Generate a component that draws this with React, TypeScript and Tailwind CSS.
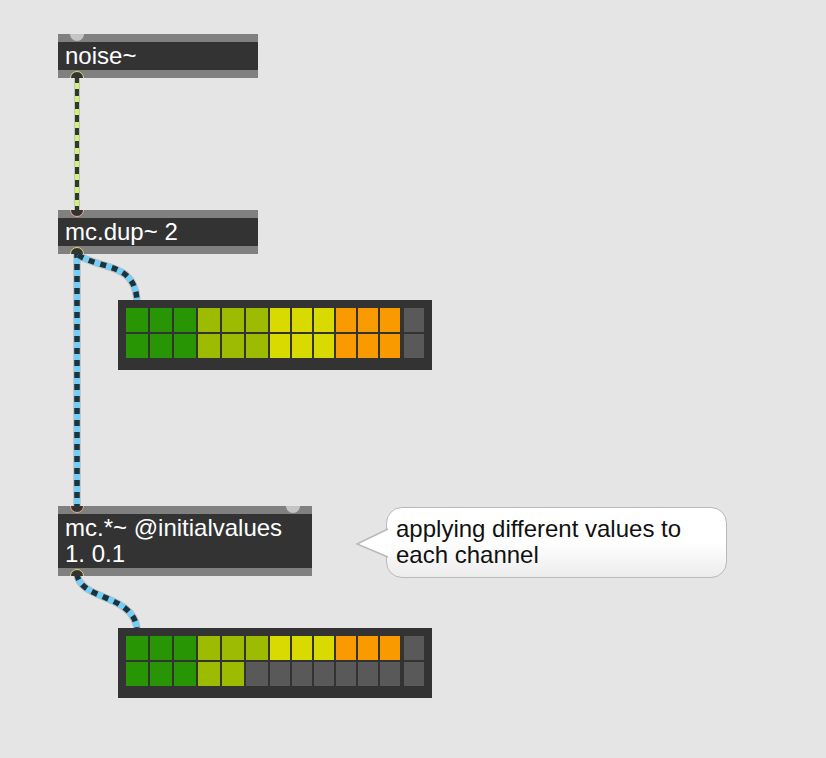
import React from "react";

const FONT = "font-['Liberation_Sans',Arial,sans-serif]";

type PortKind = "free" | "inlet" | "outlet";

function Port({ kind, left }: { kind: PortKind; left: string }) {
  if (kind === "free") {
    return (
      <div
        className={`absolute top-[-7px] ${left} w-[14px] h-[14px] rounded-full bg-[#c4c4c4]`}
      />
    );
  }
  if (kind === "inlet") {
    return (
      <div
        className={`absolute top-[-7px] ${left} w-[14px] h-[14px] rounded-full bg-[#333333] border-[1.5px] border-[#f2a694]`}
      />
    );
  }
  return (
    <div
      className={`absolute bottom-[-7px] ${left} w-[14px] h-[14px] rounded-full bg-[#333333] border-[1.5px] border-[#dcdc6a]`}
    />
  );
}

function ObjBox({
  pos,
  lines,
  ports,
  bodyH,
}: {
  pos: string;
  lines: string[];
  ports: React.ReactNode;
  bodyH: string;
}) {
  return (
    <div className={`absolute ${pos} overflow-hidden flex flex-col`}>
      <div className="h-[8px] bg-[#808080]" />
      <div
        className={`${bodyH} bg-[#333333] pl-[7px] pt-[1px] text-white text-[24px] leading-[26px] ${FONT} whitespace-pre`}
      >
        {lines.map((l, i) => (
          <div key={i}>{l}</div>
        ))}
      </div>
      <div className="h-[8px] bg-[#808080]" />
      {ports}
    </div>
  );
}

const GREEN = "bg-[#289604]";
const YG = "bg-[#9dbb00]";
const YEL = "bg-[#d9db00]";
const ORA = "bg-[#f99a00]";
const OFF = "bg-[#595959]";

const cellSpec: { w: string; c: string }[] = [
  { w: "w-[22px]", c: GREEN },
  { w: "w-[22px]", c: GREEN },
  { w: "w-[22px]", c: GREEN },
  { w: "w-[22px]", c: YG },
  { w: "w-[22px]", c: YG },
  { w: "w-[22px]", c: YG },
  { w: "w-[20px]", c: YEL },
  { w: "w-[20px]", c: YEL },
  { w: "w-[20px]", c: YEL },
  { w: "w-[20px]", c: ORA },
  { w: "w-[20px]", c: ORA },
  { w: "w-[20px]", c: ORA },
];

function MeterRow({ lit }: { lit: number }) {
  return (
    <div className="flex gap-[2px] h-[24px]">
      {cellSpec.map((s, i) => (
        <div key={i} className={`${s.w} h-full ${i < lit ? s.c : OFF}`} />
      ))}
      <div className={`w-[20px] h-full ml-[2px] ${OFF}`} />
    </div>
  );
}

function Meter({ pos, lit1, lit2 }: { pos: string; lit1: number; lit2: number }) {
  return (
    <div
      className={`absolute ${pos} w-[314px] h-[70px] bg-[#333333] pt-[8px] pl-[8px] flex flex-col gap-[2px]`}
    >
      <MeterRow lit={lit1} />
      <MeterRow lit={lit2} />
    </div>
  );
}

function Cable({ d, mc }: { d: string; mc: boolean }) {
  if (mc) {
    return (
      <g fill="none" strokeLinecap="butt">
        <path d={d} stroke="#9aa3a8" strokeWidth={7.5} opacity={0.6} />
        <path d={d} stroke="#70d0f8" strokeWidth={5.5} />
        <path d={d} stroke="#1c323e" strokeWidth={5.5} strokeDasharray="6 6" />
      </g>
    );
  }
  return (
    <g fill="none" strokeLinecap="butt">
      <path d={d} stroke="#a8ad9a" strokeWidth={6} opacity={0.6} />
      <path d={d} stroke="#d3f07c" strokeWidth={4} />
      <path d={d} stroke="#2f3a2a" strokeWidth={4} strokeDasharray="7 6" />
    </g>
  );
}

export default function App() {
  return (
    <div className="relative w-[826px] h-[758px] bg-[#e5e5e5] overflow-hidden">
      <svg
        className="absolute left-0 top-0 pointer-events-none"
        width={826}
        height={758}
        viewBox="0 0 826 758"
      >
        <Cable d="M77 76 L77 212" mc={false} />
        <Cable d="M77 252 L77 508" mc={true} />
        <Cable d="M78 255 C 102 270, 134 262, 137 300" mc={true} />
        <Cable d="M77 574 C 80 600, 132 594, 137 628" mc={true} />
      </svg>

      <ObjBox
        pos="left-[58px] top-[34px] w-[200px]"
        bodyH="h-[28px]"
        lines={["noise~"]}
        ports={
          <>
            <Port kind="free" left="left-[12px]" />
            <Port kind="outlet" left="left-[12px]" />
          </>
        }
      />

      <ObjBox
        pos="left-[58px] top-[210px] w-[200px]"
        bodyH="h-[28px]"
        lines={["mc.dup~ 2"]}
        ports={
          <>
            <Port kind="inlet" left="left-[12px]" />
            <Port kind="outlet" left="left-[12px]" />
          </>
        }
      />

      <Meter pos="left-[118px] top-[300px]" lit1={12} lit2={12} />

      <ObjBox
        pos="left-[58px] top-[506px] w-[254px]"
        bodyH="h-[54px]"
        lines={["mc.*~ @initialvalues", "1. 0.1"]}
        ports={
          <>
            <Port kind="inlet" left="left-[12px]" />
            <Port kind="free" left="left-[228px]" />
            <Port kind="outlet" left="left-[12px]" />
          </>
        }
      />

      <div
        className={`absolute left-[386px] top-[507px] w-[341px] h-[71px] rounded-[16px] border-[1.5px] border-[#b9b9b9] bg-linear-to-b from-white via-white to-[#ececec] pl-[9px] pt-[8px] text-[24px] leading-[26px] text-[#111111] ${FONT}`}
      >
        <svg
          className="absolute left-[-32px] top-[19px]"
          width={36}
          height={32}
          viewBox="0 0 36 32"
        >
          <polygon points="2,17 33,2 36,2 36,30 33,30" fill="#ffffff" />
          <polyline
            points="33,2 2,17 33,30"
            fill="none"
            stroke="#b9b9b9"
            strokeWidth={1.5}
          />
        </svg>
        <div className="relative">applying different values to</div>
        <div className="relative">each channel</div>
      </div>

      <Meter pos="left-[118px] top-[628px]" lit1={12} lit2={5} />
    </div>
  );
}
